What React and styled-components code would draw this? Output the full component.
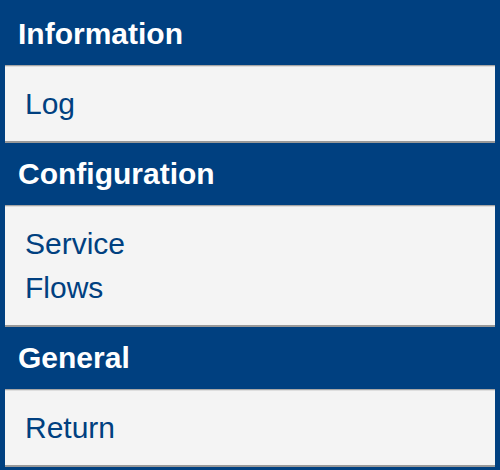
import React from "react";
import styled, { createGlobalStyle } from "styled-components";

const Global = createGlobalStyle`
  html, body {
    margin: 0;
    padding: 0;
    background: #004080;
  }
  body {
    font-family: "Liberation Sans", Arial, sans-serif;
  }
`;

const Menu = styled.nav`
  width: 500px;
  height: 470px;
  box-sizing: border-box;
  padding: 3px 5px 0;
  background: #004080;
  overflow: hidden;
`;

const SectionTitle = styled.h2`
  margin: 0;
  height: 62px;
  display: flex;
  align-items: center;
  padding-left: 13px;
  color: #ffffff;
  font-size: 30px;
  font-weight: bold;
`;

const Panel = styled.div`
  background: #f4f4f4;
  border-top: 1px solid #a6a6a6;
  border-bottom: 2px solid #999999;
  box-shadow: inset 0 1px 0 #dedede;
  padding: 16px 0 15px 20px;
`;

const Item = styled.a`
  display: block;
  height: 44px;
  line-height: 44px;
  color: #004080;
  font-size: 30px;
  text-decoration: none;
`;

const sections = [
  { title: "Information", items: ["Log"] },
  { title: "Configuration", items: ["Service", "Flows"] },
  { title: "General", items: ["Return"] },
];

export default function App() {
  return (
    <>
      <Global />
      <Menu>
        {sections.map((s) => (
          <section key={s.title}>
            <SectionTitle>{s.title}</SectionTitle>
            <Panel>
              {s.items.map((it) => (
                <Item key={it} href="#">
                  {it}
                </Item>
              ))}
            </Panel>
          </section>
        ))}
      </Menu>
    </>
  );
}
